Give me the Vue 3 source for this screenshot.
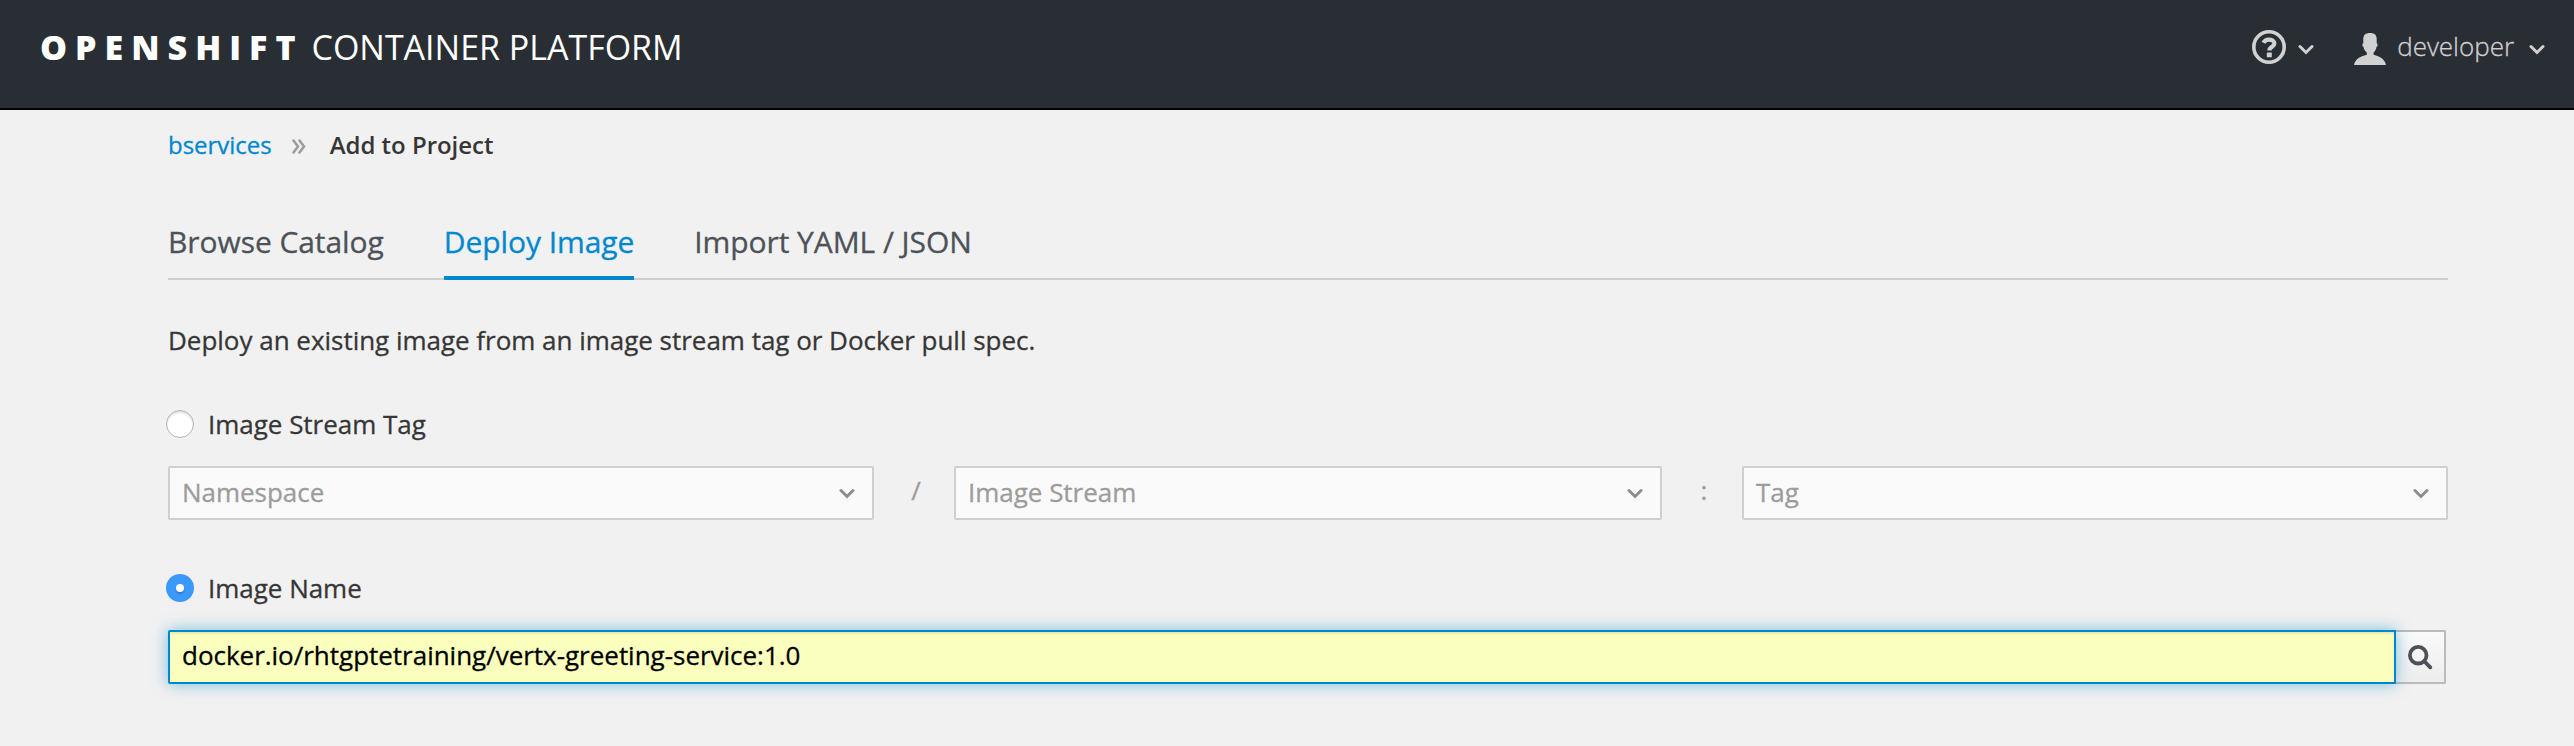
<script setup>
const tabs = [
  { label: 'Browse Catalog', active: false },
  { label: 'Deploy Image', active: true },
  { label: 'Import YAML / JSON', active: false },
]
const selects = [
  { label: 'Namespace', after: '/' },
  { label: 'Image Stream', after: ':' },
  { label: 'Tag', after: '' },
]
</script>

<template>
  <div class="page">
    <header class="navbar">
      <div class="brand"><b>OPENSHIFT</b><span>CONTAINER PLATFORM</span></div>
      <nav class="utility">
        <svg class="help" viewBox="0 0 34 34">
          <circle cx="17" cy="17" r="15.2" fill="none" stroke="currentColor" stroke-width="3.6" />
          <path d="M11.400 12.800C12.600 10.600 14.400 9.600 17 9.600C20 9.600 22.400 11.200 22.400 13.600C22.400 16.800 17.400 16.700 17.400 20.400" fill="none" stroke="currentColor" stroke-width="4.2" />
          <rect x="14.800" y="22.500" width="5" height="4.800" rx=".6" fill="currentColor" />
        </svg>
        <svg class="caret help-caret" viewBox="0 0 16 11"><path d="M2 2.500L8 8.500L14 2.500" /></svg>
        <svg class="user" viewBox="0 0 32 32">
          <path d="M16 0C20.500 0 22.700 2 22.700 6V10.200C24 10.500 23.900 13.300 22.500 13.900C22 16.500 21 18 19.600 19.500V21.800C26 23.300 31 26.500 32 32H0C1 26.500 6 23.300 12.800 21.800V19.500C11.200 18 10 16.500 9.500 13.900C8.100 13.300 8 10.500 9.300 10.200V6C9.300 2 11.500 0 16 0Z" fill="currentColor" />
        </svg>
        <span class="username">developer</span>
        <svg class="caret" viewBox="0 0 16 11"><path d="M2 2.500L8 8.500L14 2.500" /></svg>
      </nav>
    </header>

    <main class="content">
      <div class="breadcrumb">
        <a>bservices</a>
        <svg viewBox="0 0 14 15"><path d="M1.500 1.500L6 7.500L1.500 13.500M7.500 1.500L12 7.500L7.500 13.500" /></svg>
        <strong>Add to Project</strong>
      </div>

      <ul class="tabs">
        <li v-for="t in tabs" :key="t.label" :class="{ active: t.active }">{{ t.label }}</li>
      </ul>

      <p class="intro">Deploy an existing image from an image stream tag or Docker pull spec.</p>

      <label class="choice first"><i class="radio"></i><span>Image Stream Tag</span></label>
      <div class="selects">
        <template v-for="s in selects" :key="s.label">
          <div class="select">
            <span>{{ s.label }}</span>
            <svg class="caret" viewBox="0 0 16 11"><path d="M2 2.500L8 8.500L14 2.500" /></svg>
          </div>
          <div v-if="s.after" class="sep">{{ s.after }}</div>
        </template>
      </div>

      <label class="choice second"><i class="radio checked"></i><span>Image Name</span></label>
      <div class="group">
        <div class="input"><span>docker.io/rhtgptetraining/vertx-greeting-service:1.0</span></div>
        <div class="search">
          <svg viewBox="0 0 25 25">
            <circle cx="10.200" cy="10.200" r="8.300" />
            <path d="M16.500 16.500L22.300 22.300" stroke-linecap="round" />
          </svg>
        </div>
      </div>
    </main>
  </div>
</template>

<style>
body { background: #f1f1f1; }
</style>

<style scoped>
.page {
  height: 746px;
  overflow: hidden;
  background: #f1f1f1;
  color: #363636;
  font: 26px/44px "Open Sans", "Noto Sans", sans-serif;
  letter-spacing: -.02px;
  -webkit-text-stroke: .3px currentColor;
}
.page * { box-sizing: border-box; }
.navbar {
  height: 110px;
  padding: 0 29px 0 40px;
  display: flex;
  justify-content: space-between;
  align-items: flex-start;
  background: #292e34;
  border-bottom: 2px solid #030303;
}
.brand {
  display: flex;
  padding-top: 25px;
  color: #fff;
  font-size: 34px;
  white-space: nowrap;
  -webkit-text-stroke: 0;
}
.brand b { font-weight: 800; letter-spacing: 8px; margin-right: 8px; }
.brand span { font-weight: 400; }
.utility { display: flex; align-items: center; height: 92px; color: #d1d1d1; }
.help { width: 34px; height: 34px; margin: 2px 12px 0 0; }
.caret { width: 16px; height: 11px; flex: none; }
.caret path { fill: none; stroke: currentColor; stroke-width: 3; stroke-linecap: round; stroke-linejoin: miter; }
.utility .caret { margin-top: 6px; }
.help-caret { margin-right: 40px; }
.user { width: 32px; height: 32px; margin: 5px 11px 0 0; }
.username { font-weight: 300; margin-right: 15px; }
.content { padding: 0 126px 0 168px; }
.breadcrumb { display: flex; align-items: center; height: 36px; margin-top: 17px; font-size: 24px; white-space: nowrap; }
.breadcrumb a { color: #0088ce; }
.breadcrumb svg { width: 14px; height: 15px; margin: 2px 24px 0 20px; }
.breadcrumb path { fill: none; stroke: #9c9c9c; stroke-width: 2.6; stroke-linecap: round; }
.breadcrumb strong { font-weight: 600; -webkit-text-stroke: 0; }
.tabs {
  list-style: none;
  display: flex;
  gap: 60px;
  margin: 57px 0 0;
  padding: 0;
  height: 60px;
  border-bottom: 2px solid #cfcfcf;
  color: #4d5258;
  font-size: 30px;
  line-height: 44px;
  letter-spacing: -.07px;
  white-space: nowrap;
}
.tabs li { height: 60px; }
.tabs .active { color: #0088ce; border-bottom: 4px solid #0088ce; }
.intro { margin: 38px 0 0; }
.choice { display: flex; align-items: center; height: 44px; margin-left: -2px; }
.choice span { margin-left: 14px; }
.first { margin-top: 40px; }
.second { margin-top: 46px; }
.radio {
  width: 28px;
  height: 28px;
  border-radius: 50%;
  border: 1px solid #b4b4b4;
  background: #fff;
  box-shadow: inset 0 2px 2px rgba(0, 0, 0, .12);
}
.radio.checked {
  display: grid;
  place-items: center;
  border: 0;
  background: #3b99fc;
  box-shadow: none;
}
.radio.checked::after {
  content: "";
  width: 8px;
  height: 8px;
  border-radius: 50%;
  background: #fff;
  box-shadow: 0 2px 2px rgba(0, 0, 0, .2);
}
.selects {
  display: grid;
  grid-template-columns: 706px 80px 708px 80px 706px;
  margin-top: 20px;
}
.select {
  display: flex;
  align-items: center;
  justify-content: space-between;
  height: 54px;
  padding: 0 17px 3px 12px;
  border: 2px solid #cfcfcf;
  border-radius: 2px;
  background: #fafafa;
  color: #9c9c9c;
}
.select .caret { color: #8b8d8f; margin-top: 4px; }
.sep { height: 50px; padding-left: 4px; line-height: 48px; text-align: center; color: #9c9c9c; }
.group { display: flex; width: 2278px; margin-top: 20px; }
.input {
  position: relative;
  z-index: 1;
  flex: 1;
  height: 54px;
  padding-left: 12px;
  line-height: 47px;
  border: 2px solid #0088ce;
  border-radius: 2px 0 0 2px;
  background: #faffbd;
  color: #000;
  box-shadow: inset 0 2px 2px rgba(3, 3, 3, .075), 0 0 16px rgba(0, 136, 206, .5);
}
.search {
  display: flex;
  align-items: center;
  width: 50px;
  height: 54px;
  padding-left: 12px;
  border: 2px solid #bbb;
  border-left: 0;
  border-radius: 0 2px 2px 0;
  background: linear-gradient(#fafafa, #ededed);
}
.search svg { width: 25px; height: 25px; }
.search circle, .search path { fill: none; stroke: #4d5258; stroke-width: 3.8; }
</style>
